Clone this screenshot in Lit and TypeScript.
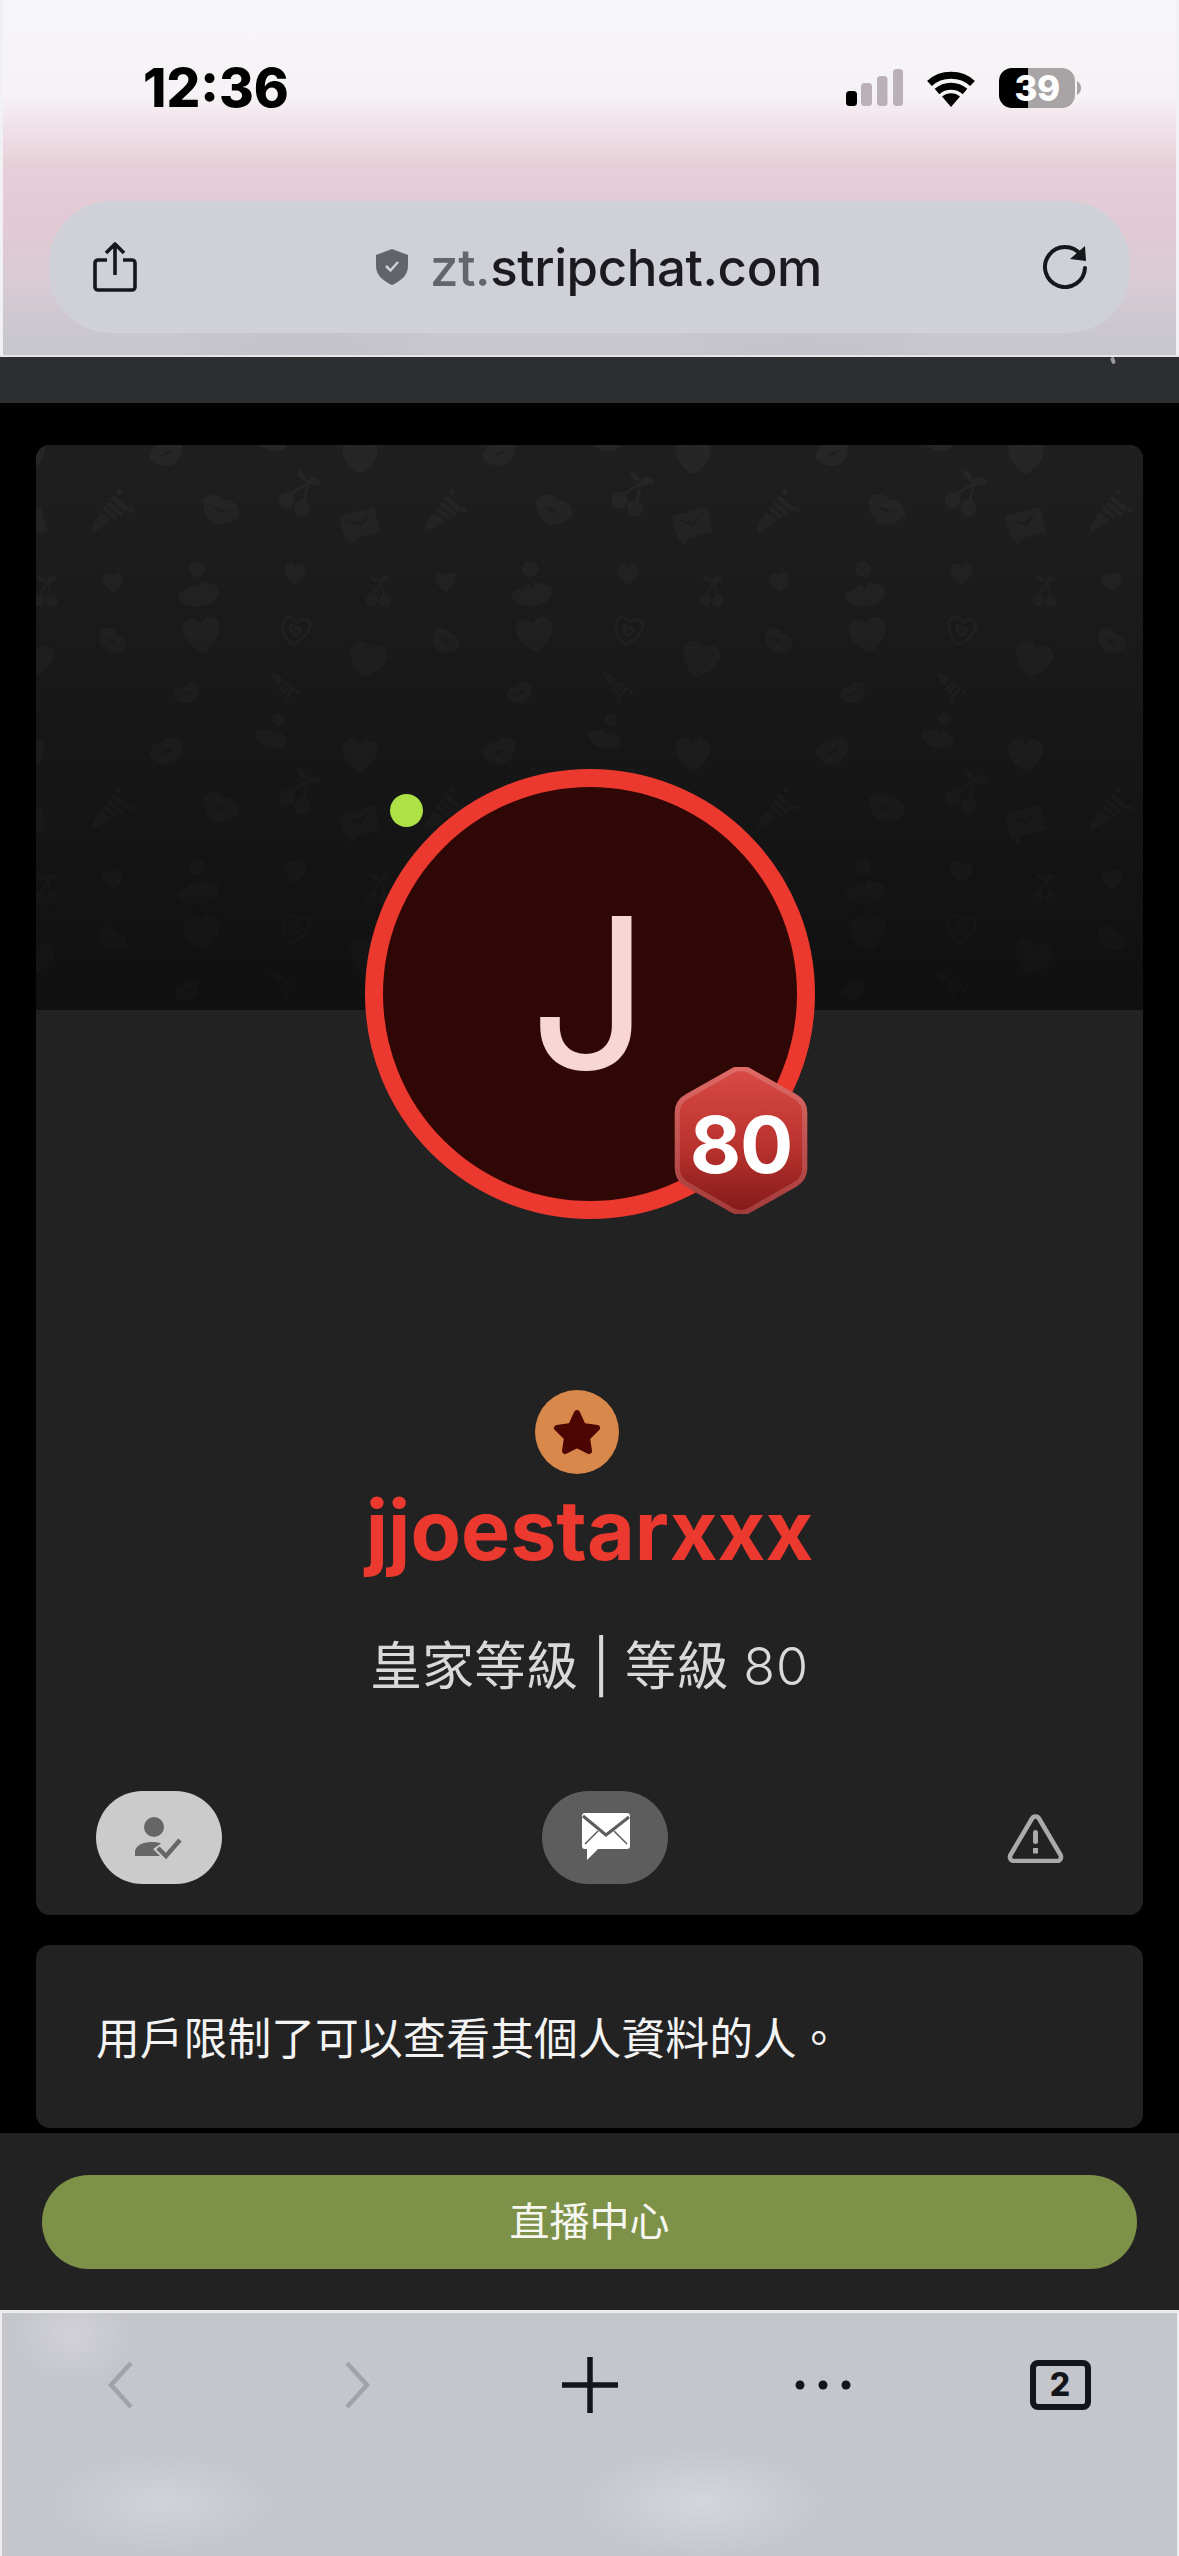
import { LitElement, html, css } from "lit";
import { customElement } from "lit/decorators.js";

@customElement("app-root")
export class AppRoot extends LitElement {
  static styles = css`
    :host {
      display: flex;
      flex-direction: column;
      width: 1179px;
      height: 2556px;
      background: #000;
      overflow: hidden;
      font-family: "Inter", "Noto Sans CJK TC", sans-serif;
    }
    * { box-sizing: border-box; }
    svg { display: block; }

    /* top browser chrome */
    .chrome {
      height: 355px;
      flex: none;
      border: solid #f1f1f3;
      border-width: 0 3px;
      padding-top: 67px;
      background:
        radial-gradient(ellipse 130px 30px at 300px 340px, rgba(190,190,198,.5), transparent),
        radial-gradient(ellipse 130px 30px at 800px 345px, rgba(190,190,198,.4), transparent),
        linear-gradient(180deg, #f6f6f8 0, #f6f2f6 95px, #f1e4ea 122px, #e6cfd8 165px, #e2cad4 225px, #d9cbd4 280px, #c7c6cd 345px);
    }
    .status {
      display: flex;
      align-items: center;
      height: 41px;
      padding-left: 140px;
    }
    .time {
      font-size: 53px;
      font-weight: 800;
      color: #000;
      line-height: 41px;
      letter-spacing: 0;
      width: 703px;
      padding-top: 1px;
    }
    .signal { margin-right: 22px; }
    .wifi { margin-right: 22px; }
    .battery {
      width: 76px;
      height: 40px;
      border-radius: 13px;
      background: linear-gradient(90deg, #000 0 29px, #a8a4a6 29px);
      color: #fff;
      font-size: 35px;
      font-weight: 800;
      line-height: 40px;
      text-align: center;
      letter-spacing: -0.5px;
    }
    .nub { margin-left: 2px; }
    .urlbar {
      margin: 93px 46px 0;
      height: 132px;
      border-radius: 62px;
      background: #cfd0d8;
      display: flex;
      align-items: center;
      justify-content: space-between;
      padding: 0 42px 0 44px;
    }
    .host {
      display: flex;
      align-items: center;
      gap: 21px;
      margin-left: 19px;
      font-size: 51px;
      font-weight: 500;
      color: #1b1b1f;
      letter-spacing: -0.4px;
    }
    .host b { font-weight: 500; color: #65656e; }

    .strip {
      height: 48px;
      flex: none;
      background: #2d2e30;
      border-top: 2px solid #e6e6e9;
      position: relative;
    }
    .tick {
      position: absolute;
      left: 1111px;
      top: 0;
      width: 4px;
      height: 7px;
      background: #9a9a9c;
      transform: rotate(-20deg);
      border-radius: 2px;
    }

    main {
      flex: none;
      height: 1730px;
      padding: 42px 36px 0;
      display: flex;
      flex-direction: column;
      gap: 30px;
    }
    .card {
      position: relative;
      background: #222;
      border-radius: 14px;
      overflow: hidden;
    }
    .profile { height: 1470px; flex: none; }
    .cover {
      height: 565px;
      background: linear-gradient(180deg, #1f1f1f 0, #181818 45%, #101010 100%);
    }
    .cover svg {
      width: 100%;
      height: 100%;
      -webkit-mask-image: linear-gradient(180deg, #000 0, rgba(0,0,0,.45) 100%);
      mask-image: linear-gradient(180deg, #000 0, rgba(0,0,0,.45) 100%);
    }
    .avatar {
      position: absolute;
      left: 329px;
      top: 324px;
      width: 450px;
      height: 450px;
      border: 18px solid #ec392f;
      border-radius: 50%;
      background: #2f0705;
      color: #f8d6d4;
      font-size: 210px;
      font-weight: 400;
      display: flex;
      align-items: center;
      justify-content: center;
      line-height: 1;
      padding-bottom: 2px;
    }
    .dot {
      position: absolute;
      left: 354px;
      top: 349px;
      width: 33px;
      height: 33px;
      border-radius: 50%;
      background: #ade145;
    }
    .hex {
      position: absolute;
      left: 638px;
      top: 622px;
      width: 134px;
      height: 147px;
      display: grid;
      place-items: center;
    }
    .hex svg { grid-area: 1 / 1; }
    .hex span {
      grid-area: 1 / 1;
      color: #fff;
      font-size: 79px;
      font-weight: 700;
      line-height: 1;
      letter-spacing: -1px;
      padding-top: 7px;
    }
    .body {
      padding-top: 380px;
      display: flex;
      flex-direction: column;
      align-items: center;
    }
    .royal {
      width: 84px;
      height: 84px;
      margin-left: -25px;
      border-radius: 50%;
      background: #d9884b;
      display: flex;
      align-items: center;
      justify-content: center;
    }
    .name {
      margin-top: 7px;
      color: #ec392f;
      font-size: 82.500px;
      font-weight: 700;
      line-height: 98px;
    }
    .level {
      margin-top: 52px;
      color: #d9d9d9;
      font-size: 52px;
      line-height: 72px;
      font-weight: 400;
      white-space: pre;
    }
    .level i { font-style: normal; font-weight: 300; letter-spacing: 1px; }
    .actions {
      align-self: stretch;
      display: flex;
      align-items: center;
      margin-top: 88px;
      padding-left: 60px;
    }
    .pill {
      width: 126px;
      height: 93px;
      border-radius: 47px;
      flex: none;
    }
    .pill.a { background: #cbcbcb; }
    .pill.b { background: #5d5d5d; margin-left: 320px; }
    .warn { margin-left: 339px; }

    .note {
      height: 183px;
      flex: none;
      display: flex;
      align-items: center;
      padding: 0 0 2px 60px;
      color: #f3f3f3;
      font-size: 43.800px;
      white-space: nowrap;
    }

    .foot {
      flex: none;
      height: 177px;
      background: #222;
      padding: 42px 42px 0;
    }
    .cta {
      height: 94px;
      border-radius: 47px;
      background: #7d9248;
      color: #f7f7f2;
      font-size: 40px;
      display: flex;
      align-items: center;
      justify-content: center;
      padding-bottom: 6px;
    }

    .toolbar {
      flex: 1;
      border: solid #eeeef0;
      border-width: 3px 2px 0 2px;
      padding-top: 42px;
      display: grid;
      grid-template-columns: 236px 240px 224px 242px 232px;
      align-items: start;
      justify-items: center;
      background:
        radial-gradient(ellipse 60px 50px at 70px 20px, rgba(214,214,220,.7), transparent),
        radial-gradient(ellipse 115px 50px at 160px 190px, rgba(212,213,220,.85), transparent),
        radial-gradient(ellipse 125px 55px at 700px 190px, rgba(214,215,222,.95), transparent),
        #c5c6cc;
    }
    .tab {
      width: 61px;
      height: 50px;
      margin-top: 5px;
      border: 6px solid #14151a;
      border-radius: 8px;
      color: #14151a;
      font-size: 32px;
      font-weight: 800;
      line-height: 38px;
      text-align: center;
    }
  `;

  render() {
    return html`
      <div class="chrome">
        <div class="status">
          <div class="time">12:36</div>
          <svg class="signal" width="57" height="37" viewBox="0 0 57 37">
            <rect x="0" y="22" width="11" height="15" rx="3.5" fill="#000"/>
            <rect x="15" y="14" width="11" height="23" rx="3.5" fill="#b9b1b6"/>
            <rect x="31" y="7" width="10.5" height="30" rx="3.5" fill="#b9b1b6"/>
            <rect x="47" y="0" width="10" height="37" rx="3.5" fill="#b9b1b6"/>
          </svg>
          <svg class="wifi" width="52" height="38" viewBox="0 0 52 38">
            <path d="M26 38 L17 27.5 C22 23 30 23 35 27.5Z" fill="#000"/>
            <path d="M4.500 14.500 C16 3.500 36 3.500 47.500 14.500 M12 22.500 C20 15.500 32 15.500 40 22.500" fill="none" stroke="#000" stroke-width="7" stroke-linecap="butt"/>
          </svg>
          <div class="battery">39</div>
          <svg class="nub" width="4" height="14" viewBox="0 0 4 14"><path d="M0 0 C3 2 4 4 4 7 C4 10 3 12 0 14Z" fill="#a8a4a6"/></svg>
        </div>
        <div class="urlbar">
          <svg width="44" height="50" viewBox="0 0 44 50" fill="none" stroke="#16171b" stroke-width="3.600">
            <path d="M14 18 H5 a3 3 0 0 0 -3 3 V45 a3 3 0 0 0 3 3 H39 a3 3 0 0 0 3 -3 V21 a3 3 0 0 0 -3 -3 H30"/>
            <path d="M22 33 V3 M13 11 L22 2 L31 11" stroke-linejoin="round"/>
          </svg>
          <div class="host">
            <svg width="34" height="36" viewBox="0 0 34 36">
              <path d="M17 0 L33 6 V17 C33 26 26 32 17 36 C8 32 1 26 1 17 V6Z" fill="#63636c"/>
              <path d="M11 17 L15.500 21.500 L23 13" fill="none" stroke="#cfd0d8" stroke-width="2.500"/>
            </svg>
            <span><b>zt.</b>stripchat.com</span>
          </div>
          <svg width="47" height="44" viewBox="0 0 47 44" fill="none">
            <path d="M40 10 A20 20 0 1 0 44 23" stroke="#16171b" stroke-width="4" stroke-linecap="round"/>
            <path d="M29 14 L45 16 L44 1Z" fill="#16171b"/>
          </svg>
        </div>
      </div>
      <div class="strip"><div class="tick"></div></div>

      <main>
        <section class="card profile">
          <div class="cover">
            <svg aria-hidden="true">
              <defs>
                <g id="lips">
                  <path fill-rule="evenodd" d="M-21 -3 C-15 -15 -6 -15 0 -11 C6 -15 15 -15 21 -3 C15 11 7 15 0 15 C-7 15 -15 11 -21 -3Z M-8 0 C-3 3 3 3 8 0 C3 -2 -3 -2 -8 0Z"/>
                </g>
                <g id="heart">
                  <path d="M0 18 C-24 4 -22 -17 -9 -17 C-4 -17 -1 -14 0 -10 C1 -14 4 -17 9 -17 C22 -17 24 4 0 18Z"/>
                </g>
                <g id="cherry">
                  <circle cx="-11" cy="13" r="8.500"/><circle cx="7" cy="17" r="8.500"/>
                  <path d="M-11 8 L6 -10 M7 12 L6 -10" fill="none" stroke="#fff" stroke-width="3"/>
                  <path d="M4 -10 C6 -20 14 -20 20 -14 C14 -8 8 -8 4 -10Z"/>
                  <path d="M5 -12 C0 -20 -6 -20 -8 -22 C-8 -14 -2 -10 5 -12Z"/>
                </g>
                <g id="env">
                  <path fill-rule="evenodd" d="M-20 -15 L20 -15 L20 13 L-8 13 L-16 21 L-16 13 L-20 13Z M-16 -11 L0 2 L16 -11 L0 -3Z"/>
                </g>
                <g id="pen">
                  <path d="M-7 16 C-18 24 -22 24 -22 24 C-22 24 -22 16 -12 5 L-2 12Z"/>
                  <path d="M-9 0 L3 10 M-5 -5 L9 7 M-1 -11 L14 2 M4 -18 L8 -14 M16 0 L20 4" fill="none" stroke="#fff" stroke-width="4.500"/>
                </g>
                <g id="person">
                  <circle cx="-1" cy="-21" r="8"/>
                  <path d="M-20 4 L-2 -6 L0 -1 L4 -8 L20 -4 L21 6 C16 14 4 18 -8 16 C-14 15 -20 10 -20 4Z"/>
                </g>
                <g id="heartline">
                  <path d="M0 16 C-14 8 -16 -6 -12 -10 C-8 -14 -3 -12 0 -8 C4 -14 10 -14 14 -10 C16 -2 10 10 0 16Z M0 6 C-6 0 -6 -4 -4 -4 C-2 -4 0 -2 0 0 C0 -2 3 -4 5 -3 C6 0 4 4 0 6Z" fill="none" stroke="#fff" stroke-width="3"/>
                </g>
                <pattern id="tile" x="0" y="-2" width="333" height="298" patternUnits="userSpaceOnUse">
                  <g fill="#fff" opacity=".03">
                  <use href="#pen" transform="translate(77 65)"/>
                  <use href="#lips" transform="translate(184 67) rotate(25) scale(.95)"/>
                  <use href="#cherry" transform="translate(264 48) rotate(15) scale(.95)"/>
                  <use href="#env" transform="translate(324 82) rotate(-15) scale(.9)"/>
                  <use href="#env" transform="translate(-9 82) rotate(-15) scale(.9)"/>
                  <use href="#person" transform="translate(162 147) scale(1)"/>
                  <use href="#heart" transform="translate(77 139) rotate(-5) scale(.55)"/>
                  <use href="#heart" transform="translate(259 131) rotate(5) scale(.6)"/>
                  <use href="#cherry" transform="translate(9 147) rotate(-10) scale(.7)"/>
                  <use href="#cherry" transform="translate(342 147) rotate(-10) scale(.7)"/>
                  <use href="#lips" transform="translate(76 198) rotate(35) scale(.75)"/>
                  <use href="#heart" transform="translate(166 192) rotate(-8) scale(1)"/>
                  <use href="#heartline" transform="translate(259 187) rotate(12) scale(.95)"/>
                  <use href="#heart" transform="translate(-2 217) rotate(15) scale(1)"/>
                  <use href="#heart" transform="translate(331 217) rotate(15) scale(1)"/>
                  <use href="#lips" transform="translate(151 250) rotate(-28) scale(.65)"/>
                  <use href="#pen" transform="translate(251 245) rotate(90) scale(.7)"/>
                  <use href="#person" transform="translate(236 292) rotate(25) scale(.8)"/>
                  <use href="#person" transform="translate(236 -6) rotate(25) scale(.8)"/>
                  <use href="#lips" transform="translate(131 10) rotate(-25) scale(.85)"/>
                  <use href="#lips" transform="translate(131 308) rotate(-25) scale(.85)"/>
                  <use href="#heart" transform="translate(324 14) scale(.95)"/>
                  <use href="#heart" transform="translate(-9 14) scale(.95)"/>
                  <use href="#heart" transform="translate(324 312) scale(.95)"/>
                  </g>
                </pattern>
              </defs>
              <rect width="100%" height="100%" fill="url(#tile)"/>
            </svg>
          </div>

          <div class="avatar">J</div>
          <div class="dot"></div>
          <div class="hex">
            <svg width="134" height="147" viewBox="2 2 130 143">
              <defs>
                <linearGradient id="hexFill" x1="0" y1="0" x2="0" y2="1">
                  <stop offset="0" stop-color="#d94a45"/>
                  <stop offset=".55" stop-color="#b9322d"/>
                  <stop offset="1" stop-color="#83191a"/>
                </linearGradient>
                <linearGradient id="hexEdge" x1="0" y1="0" x2="0" y2="1">
                  <stop offset="0" stop-color="#df6a66"/>
                  <stop offset="1" stop-color="#a23c3b"/>
                </linearGradient>
              </defs>
              <path d="M58 6 a18 18 0 0 1 18 0 L120 31 a18 18 0 0 1 9 15 V101 a18 18 0 0 1 -9 15 L76 141 a18 18 0 0 1 -18 0 L14 116 a18 18 0 0 1 -9 -15 V46 a18 18 0 0 1 9 -15Z" fill="url(#hexFill)" stroke="url(#hexEdge)" stroke-width="5"/>
            </svg>
            <span>80</span>
          </div>

          <div class="body">
            <div class="royal">
              <svg width="50" height="48" viewBox="0 0 50 48">
                <path d="M25 5 L31 18 L45 20 L35 30 L37 43 L25 37 L13 43 L15 30 L5 20 L19 18Z" fill="#4c0500" stroke="#4c0500" stroke-width="6" stroke-linejoin="round"/>
              </svg>
            </div>
            <div class="name">jjoestarxxx</div>
            <div class="level">皇家等級 | 等級 <i>80</i></div>
            <div class="actions">
              <div class="pill a">
                <svg width="126" height="93" viewBox="0 0 126 93">
                  <circle cx="58" cy="36" r="10" fill="#666"/>
                  <path d="M39 65 V61 C39 55 46 51 56 51 C60 51 63 51.500 65 52.500 L57 58 L64 65Z" fill="#666"/>
                  <path d="M62 57 L70 65 L84 49" fill="none" stroke="#666" stroke-width="4.500"/>
                </svg>
              </div>
              <div class="pill b">
                <svg width="126" height="93" viewBox="0 0 126 93">
                  <path d="M43 22 H85 a3 3 0 0 1 3 3 V55 a3 3 0 0 1 -3 3 H56 L45 69 V58 H43 a3 3 0 0 1 -3 -3 V25 a3 3 0 0 1 3 -3Z" fill="#fff"/>
                  <path d="M41 25 L64 44 L87 26" fill="none" stroke="#5d5d5d" stroke-width="3"/>
                  <path d="M43 53 L56 40 M85 53 L72 40" fill="none" stroke="#5d5d5d" stroke-width="1.500"/>
                </svg>
              </div>
              <svg class="warn" width="57" height="50" viewBox="0 0 57 50">
                <path d="M25 5.500 a4 4 0 0 1 7 0 L53.500 42 a4 4 0 0 1 -3.500 6 H7 a4 4 0 0 1 -3.500 -6Z" fill="none" stroke="#aaa" stroke-width="4.500" stroke-linejoin="round"/>
                <rect x="26" y="17" width="5" height="14" rx="2.500" fill="#aaa"/>
                <rect x="26" y="35" width="5" height="5.500" fill="#aaa"/>
              </svg>
            </div>
          </div>
        </section>

        <section class="card note">用戶限制了可以查看其個人資料的人。</section>
      </main>

      <div class="foot"><div class="cta">直播中心</div></div>

      <div class="toolbar">
        <svg width="30" height="60" viewBox="0 0 30 60" fill="none" stroke="#a2a3aa" stroke-width="4.500">
          <path d="M26 8 L6 30 L26 52"/>
        </svg>
        <svg width="30" height="60" viewBox="0 0 30 60" fill="none" stroke="#a2a3aa" stroke-width="4.500">
          <path d="M4 8 L24 30 L4 52"/>
        </svg>
        <svg width="60" height="60" viewBox="0 0 60 60" fill="none" stroke="#14151a" stroke-width="5.500">
          <path d="M30 2 V58 M2 30 H58"/>
        </svg>
        <svg width="60" height="60" viewBox="0 0 60 60" fill="#14151a">
          <circle cx="7" cy="30" r="4.500"/><circle cx="30" cy="30" r="4.500"/><circle cx="53" cy="30" r="4.500"/>
        </svg>
        <div class="tab">2</div>
      </div>
    `;
  }
}
